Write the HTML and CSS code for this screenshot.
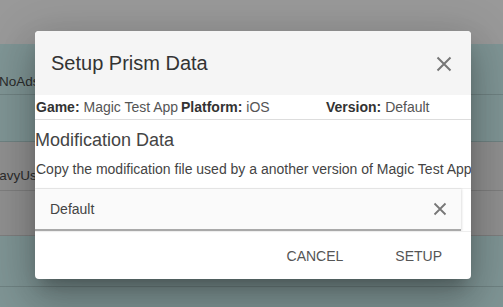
FILE: index.html
```html
<!DOCTYPE html>
<html>
<head>
<meta charset="utf-8">
<link rel="stylesheet" href="styles.css">
</head>
<body>
<div class="page">
  <div class="row row-head"></div>
  <div class="row row-teal row-text"><span class="cell-text cell-noads">NoAds</span></div>
  <div class="row row-teal row-b"></div>
  <div class="row row-gray row-text2"><span class="cell-text cell-heavy">HeavyUser</span></div>
  <div class="row row-gray row-c"></div>
  <div class="row row-teal row-d"></div>
  <div class="row row-teal row-e"></div>
</div>

<div class="modal">
  <div class="modal-header">
    <h2 class="modal-title">Setup Prism Data</h2>
    <svg class="close-icon" width="16" height="16" viewBox="0 0 16 16"><path d="M1.5 1.5 L14.5 14.5 M14.5 1.5 L1.5 14.5" stroke="#777" stroke-width="2" fill="none"/></svg>
  </div>
  <div class="info-row">
    <div class="info-cell"><b>Game:</b> Magic Test App</div>
    <div class="info-cell"><b>Platform:</b> iOS</div>
    <div class="info-cell"><b>Version:</b> Default</div>
  </div>
  <div class="mod-section">
    <h3 class="mod-title">Modification Data</h3>
    <p class="mod-desc">Copy the modification file used by a another version of Magic Test App</p>
  </div>
  <div class="select-box">
    <span class="select-value">Default</span>
    <svg class="clear-icon" width="14" height="14" viewBox="0 0 14 14"><path d="M1.5 1.5 L12.5 12.5 M12.5 1.5 L1.5 12.5" stroke="#777" stroke-width="1.8" fill="none"/></svg>
  </div>
  <div class="modal-footer">
    <span class="btn">CANCEL</span>
    <span class="btn">SETUP</span>
  </div>
</div>
</body>
</html>
```

FILE: styles.css
```css
html, body {
  margin: 0;
  padding: 0;
}
body {
  width: 503px;
  height: 307px;
  overflow: hidden;
  font-family: "Liberation Sans", Arial, sans-serif;
  position: relative;
  background: #7f9595;
}
.page {
  display: flex;
  flex-direction: column;
}
.row {
  box-sizing: border-box;
  border-bottom: 1px solid #6f8282;
  display: flex;
  align-items: center;
  overflow: hidden;
  white-space: nowrap;
}
.row-head { height: 44px; background: #999999; border-bottom: none; }
.row-teal { background: #7f9595; }
.row-gray { background: #909090; border-bottom-color: #7e7e7e; }
.row-text { height: 51px; padding-top: 25px; }
.row-b { height: 47px; }
.row-text2 { height: 49px; padding-top: 19px; }
.row-c { height: 45px; }
.row-d { height: 51px; }
.row-e { height: 20px; border-bottom: none; }
.cell-text {
  display: block;
  width: 35px;
  overflow: hidden;
  font-size: 13.5px;
  color: #2c2c2c;
}
.cell-noads { text-indent: -1px; }
.cell-heavy { text-indent: -18px; }

.modal {
  position: absolute;
  left: 35px;
  top: 31px;
  width: 436px;
  height: 248px;
  background: #fff;
  border-radius: 4px;
  overflow: hidden;
  box-shadow: 0 11px 15px -7px rgba(0,0,0,.25), 0 24px 38px 3px rgba(0,0,0,.16), 0 9px 46px 8px rgba(0,0,0,.14);
  display: flex;
  flex-direction: column;
}
.modal-header {
  height: 64px;
  background: #f5f5f5;
  display: flex;
  align-items: center;
  justify-content: space-between;
  padding: 0 19px 0 16px;
  flex-shrink: 0;
}
.modal-title {
  margin: 0;
  font-size: 20px;
  font-weight: normal;
  color: #333;
  padding-top: 0;
}
.close-icon { margin-top: 2px; }
.info-row {
  height: 25px;
  box-sizing: border-box;
  border-bottom: 1px solid #dddddd;
  display: grid;
  grid-template-columns: repeat(3, 1fr);
  align-items: center;
  font-size: 14px;
  color: #555;
  padding-left: 1px;
  flex-shrink: 0;
}
.info-cell b { color: #333; }
.mod-section {
  height: 69px;
  box-sizing: border-box;
  border-bottom: 1px solid #eeeeee;
  flex-shrink: 0;
}
.mod-title {
  margin: 9px 0 0 0;
  font-size: 18px;
  font-weight: normal;
  color: #444;
  line-height: 22px;
}
.mod-desc {
  margin: 9px 0 0 1px;
  font-size: 14px;
  color: #444;
  white-space: nowrap;
  line-height: 18px;
}
.select-box {
  width: 426px;
  height: 42px;
  box-sizing: border-box;
  background: #fafafa;
  border-bottom: 2px solid #a9a9a9;
  box-shadow: 1px 0 2px rgba(0,0,0,.12);
  display: flex;
  align-items: center;
  justify-content: space-between;
  padding: 0 14px 0 15px;
  flex-shrink: 0;
}
.select-value {
  font-size: 14px;
  color: #444;
}
.modal-footer {
  flex: 1;
  border-top: 1px solid #eeeeee;
  display: flex;
  justify-content: flex-end;
  align-items: center;
  gap: 52px;
  padding-right: 29px;
}
.btn {
  font-size: 14px;
  color: #555;
}
```
